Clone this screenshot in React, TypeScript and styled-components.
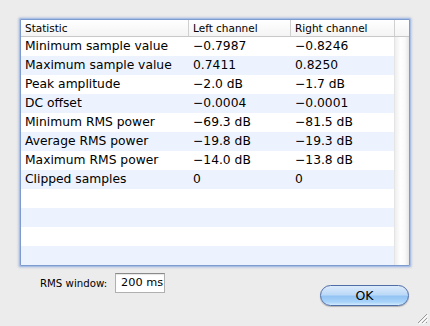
import styled, { createGlobalStyle } from 'styled-components';

const rows = [
    ['Minimum sample value', '\u22120.7987', '\u22120.8246'],
    ['Maximum sample value', '0.7411', '0.8250'],
    ['Peak amplitude', '\u22122.0 dB', '\u22121.7 dB'],
    ['DC offset', '\u22120.0004', '\u22120.0001'],
    ['Minimum RMS power', '\u221269.3 dB', '\u221281.5 dB'],
    ['Average RMS power', '\u221219.8 dB', '\u221219.3 dB'],
    ['Maximum RMS power', '\u221214.0 dB', '\u221213.8 dB'],
    ['Clipped samples', '0', '0'],
    ['', '', ''],
    ['', '', ''],
    ['', '', ''],
    ['', '', ''],
];

const GlobalStyle = createGlobalStyle`
    html, body {
        margin: 0;
        padding: 0;
        background: #ececec;
    }
    body {
        font-family: 'DejaVu Sans', 'Liberation Sans', sans-serif;
        color: #000;
    }
`

const Window = styled.div`
    position: relative;
    width: 430px;
    height: 326px;
    box-sizing: border-box;
    padding: 19px 0 0 20px;
    display: flex;
    flex-direction: column;
`

const Frame = styled.div`
    width: 390px;
    box-sizing: border-box;
    border: 1px solid #7e9bcf;
    box-shadow: 0 0 0 1px #a9bfe3, 0 0 2px 2px rgba(120, 150, 210, 0.35);
    border-radius: 1px;
    background: #fff;
    display: flex;
    flex-direction: column;
`

const HeaderRow = styled.div`
    display: grid;
    grid-template-columns: 168px 102px 104px 1fr;
    height: 16px;
    border-bottom: 1px solid #c8c8c8;
    background: linear-gradient(#ffffff, #f4f4f4);
`

const HeaderCell = styled.div<{ $last?: boolean }>`
    font-size: 10.5px;
    line-height: 16px;
    padding-left: 4px;
    border-right: ${p => (p.$last ? 'none' : '1px solid #d0d0d0')};
    white-space: nowrap;
    overflow: hidden;
`

const Body = styled.div`
    display: flex;
`

const RowList = styled.div`
    width: 373px;
`

const Row = styled.div<{ $odd: boolean }>`
    display: grid;
    grid-template-columns: 168px 102px 1fr;
    height: 19px;
    background: ${p => (p.$odd ? '#edf3fe' : '#ffffff')};
`

const Cell = styled.div`
    font-size: 12.3px;
    line-height: 19px;
    padding-left: 4px;
    white-space: nowrap;
`

const Track = styled.div`
    flex: 1;
    border-left: 1px solid #e4e4e4;
    background: linear-gradient(90deg, #eeeeee, #ffffff 40%, #fafafa 70%, #e6e6e6);
`

const Footer = styled.div`
    display: flex;
    align-items: flex-start;
    padding: 7px 0 0 20px;
`

const Label = styled.span`
    font-size: 10.2px;
    line-height: 19px;
    margin-top: 1px;
    margin-right: 8px;
    white-space: nowrap;
`

const Field = styled.div`
    width: 50px;
    height: 20px;
    box-sizing: border-box;
    border: 1px solid #b0b0b0;
    border-top-color: #8a8a8a;
    background: #fff;
    font-size: 11.3px;
    line-height: 18px;
    padding-left: 5px;
    white-space: nowrap;
    overflow: hidden;
    box-shadow: inset 0 1px 1px rgba(0, 0, 0, 0.1);
`

const OkButton = styled.button`
    margin-left: auto;
    margin-right: 21px;
    margin-top: 12px;
    width: 89px;
    height: 21px;
    border-radius: 11px;
    border: 1px solid #4f6da6;
    background: linear-gradient(#dcebfb 0%, #bcd9f7 45%, #94c4f3 55%, #a9d4fa 85%, #d2ecff 100%);
    box-shadow: 0 1px 1px rgba(0, 0, 0, 0.25);
    font-family: 'DejaVu Sans', 'Liberation Sans', sans-serif;
    font-size: 12.5px;
    color: #000;
    padding: 0;
    line-height: 19px;
`

const Grip = styled.svg`
    position: absolute;
    right: 2px;
    bottom: 2px;
`

export default function App() {
    return (
        <>
            <GlobalStyle />
            <Window>
                <Frame>
                    <HeaderRow>
                        <HeaderCell>Statistic</HeaderCell>
                        <HeaderCell>Left channel</HeaderCell>
                        <HeaderCell>Right channel</HeaderCell>
                        <HeaderCell $last />
                    </HeaderRow>
                    <Body>
                        <RowList>
                            {rows.map((r, i) => (
                                <Row key={i} $odd={i % 2 === 1}>
                                    <Cell>{r[0]}</Cell>
                                    <Cell>{r[1]}</Cell>
                                    <Cell>{r[2]}</Cell>
                                </Row>
                            ))}
                        </RowList>
                        <Track />
                    </Body>
                </Frame>
                <Footer>
                    <Label>RMS window:</Label>
                    <Field>200 ms</Field>
                    <OkButton>OK</OkButton>
                </Footer>
                <Grip width="11" height="11" viewBox="0 0 11 11">
                    <path d="M10 1 L1 10 M10 5 L5 10 M10 9 L9 10" stroke="#9a9a9a" strokeWidth="1" />
                    <path d="M11 2 L2 11 M11 6 L6 11" stroke="#ffffff" strokeWidth="1" />
                </Grip>
            </Window>
        </>
    )
}
